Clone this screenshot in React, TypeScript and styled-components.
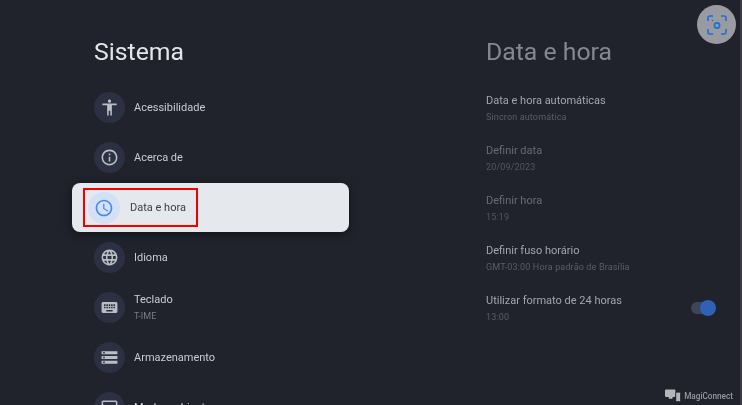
import React from 'react';
import styled, { createGlobalStyle } from 'styled-components';
import {
  MdAccessibility,
  MdInfoOutline,
  MdAccessTime,
  MdLanguage,
  MdKeyboard,
  MdStorage,
} from 'react-icons/md';

const GlobalStyle = createGlobalStyle`
  html, body {
    margin: 0;
    padding: 0;
    background-color: #20232c;
    font-family: Roboto, "Liberation Sans", sans-serif;
  }
`;

const Screen = styled.div`
  position: relative;
  display: flex;
  width: 742px;
  height: 405px;
  overflow: hidden;
  background-color: #20232c;
  box-sizing: border-box;
  border-right: 2px solid #3a3c42;
  filter: blur(0.35px);
`;

const MenuColumn = styled.div`
  display: flex;
  flex-direction: column;
  width: 277px;
  margin-left: 72px;
`;

const MenuTitle = styled.h1`
  margin: 37px 0 0 22px;
  height: 45px;
  flex-shrink: 0;
  font-size: 24.8px;
  line-height: 30px;
  font-weight: 400;
  color: #e3e5e8;
`;

const MenuList = styled.div`
  display: flex;
  flex-direction: column;
  flex-shrink: 0;
`;

const MenuRow = styled.div`
  display: flex;
  align-items: center;
  gap: 9px;
  height: 50px;
  padding-left: 22px;
  flex-shrink: 0;
`;

const FocusedRow = styled.div`
  display: flex;
  align-items: center;
  height: 49px;
  margin: 1px 0 0;
  padding-left: 11px;
  flex-shrink: 0;
  border-radius: 8px;
  background-color: #e5e8ec;
  box-shadow: 0 2px 10px rgba(0, 0, 0, 0.45);
`;

const Highlight = styled.div`
  display: flex;
  align-items: center;
  gap: 10px;
  box-sizing: border-box;
  width: 115px;
  height: 39px;
  padding-left: 3px;
  border: 2px solid #f00000;
`;

const IconCircle = styled.div<{ $focused?: boolean }>`
  display: flex;
  align-items: center;
  justify-content: center;
  flex-shrink: 0;
  width: ${(p) => (p.$focused ? '32px' : '31px')};
  height: ${(p) => (p.$focused ? '32px' : '31px')};
  border-radius: 50%;
  font-size: ${(p) => (p.$focused ? '20px' : '19px')};
  color: ${(p) => (p.$focused ? '#4d87e6' : '#b9bdc4')};
  background-color: ${(p) => (p.$focused ? '#d3e1f7' : '#2b3142')};
`;

const RowText = styled.div`
  display: flex;
  flex-direction: column;
  gap: 5px;
`;

const RowLabel = styled.span<{ $focused?: boolean }>`
  font-size: 11px;
  line-height: 13px;
  color: ${(p) => (p.$focused ? '#3c4047' : '#c9ccd1')};
`;

const RowHint = styled.span`
  font-size: 9px;
  line-height: 11px;
  color: #777b83;
`;

const DetailColumn = styled.div`
  display: flex;
  flex-direction: column;
  margin-left: 137px;
  width: 244px;
`;

const DetailTitle = styled.h2`
  margin: 37px 0 0;
  height: 46px;
  flex-shrink: 0;
  font-size: 24.8px;
  line-height: 30px;
  font-weight: 400;
  color: #85888f;
`;

const DetailRow = styled.div`
  display: flex;
  align-items: center;
  justify-content: space-between;
  height: 50px;
  flex-shrink: 0;
`;

const DetailText = styled.div`
  display: flex;
  flex-direction: column;
  gap: 5px;
`;

const DetailLabel = styled.span<{ $disabled?: boolean }>`
  font-size: 11px;
  line-height: 13px;
  color: ${(p) => (p.$disabled ? '#686b72' : '#a3a6ac')};
`;

const DetailHint = styled.span<{ $disabled?: boolean }>`
  font-size: 9px;
  line-height: 11px;
  letter-spacing: 0.15px;
  color: ${(p) => (p.$disabled ? '#53565d' : '#5b5e65')};
`;

const Toggle = styled.div`
  position: relative;
  width: 23px;
  height: 12px;
  margin-right: 16px;
  border-radius: 6px;
  background-color: #3d4658;
`;

const ToggleThumb = styled.div`
  position: absolute;
  top: -2px;
  right: -2px;
  width: 16px;
  height: 16px;
  border-radius: 50%;
  background-color: #2f61b7;
`;

const CaptureButton = styled.div`
  position: absolute;
  top: 5px;
  right: 4px;
  display: flex;
  align-items: center;
  justify-content: center;
  width: 39px;
  height: 39px;
  border-radius: 50%;
  background-color: #9a9ba0;
`;

const Watermark = styled.div`
  position: absolute;
  right: 7px;
  bottom: 3px;
  display: flex;
  align-items: center;
  gap: 3px;
  font-size: 8.2px;
  font-weight: 500;
  color: #96989c;
`;

const MENU_ITEMS = [
  { label: 'Acessibilidade', icon: <MdAccessibility /> },
  { label: 'Acerca de', icon: <MdInfoOutline /> },
  { label: 'Data e hora', icon: <MdAccessTime />, focused: true },
  { label: 'Idioma', icon: <MdLanguage /> },
  { label: 'Teclado', hint: 'T-IME', icon: <MdKeyboard /> },
  { label: 'Armazenamento', icon: <MdStorage /> },
  {
    label: 'Modo ambiente',
    icon: (
      <svg width="19" height="19" viewBox="0 0 24 24" fill="none" stroke="currentColor" strokeWidth="2">
        <rect x="3" y="4" width="18" height="15" rx="1" />
        <circle cx="12" cy="12" r="2" fill="currentColor" />
      </svg>
    ),
  },
];

const DETAIL_ITEMS = [
  { label: 'Data e hora automáticas', hint: 'Sincron automática' },
  { label: 'Definir data', hint: '20/09/2023', disabled: true },
  { label: 'Definir hora', hint: '15:19', disabled: true },
  { label: 'Definir fuso horário', hint: 'GMT-03:00 Hora padrão de Brasília' },
  { label: 'Utilizar formato de 24 horas', hint: '13:00', toggle: true },
];

const App: React.FC = () => {
  return (
    <Screen>
      <GlobalStyle />
      <MenuColumn>
        <MenuTitle>Sistema</MenuTitle>
        <MenuList>
          {MENU_ITEMS.map((item) =>
            item.focused ? (
              <FocusedRow key={item.label}>
                <Highlight>
                  <IconCircle $focused>{item.icon}</IconCircle>
                  <RowLabel $focused>{item.label}</RowLabel>
                </Highlight>
              </FocusedRow>
            ) : (
              <MenuRow key={item.label}>
                <IconCircle>{item.icon}</IconCircle>
                <RowText>
                  <RowLabel>{item.label}</RowLabel>
                  {item.hint && <RowHint>{item.hint}</RowHint>}
                </RowText>
              </MenuRow>
            )
          )}
        </MenuList>
      </MenuColumn>
      <DetailColumn>
        <DetailTitle>Data e hora</DetailTitle>
        {DETAIL_ITEMS.map((item) => (
          <DetailRow key={item.label}>
            <DetailText>
              <DetailLabel $disabled={item.disabled}>{item.label}</DetailLabel>
              <DetailHint $disabled={item.disabled}>{item.hint}</DetailHint>
            </DetailText>
            {item.toggle && (
              <Toggle>
                <ToggleThumb />
              </Toggle>
            )}
          </DetailRow>
        ))}
      </DetailColumn>
      <CaptureButton>
        <svg width="22" height="22" viewBox="0 0 22 22" fill="none" stroke="#1b6fd8" strokeWidth="1.6">
          <path d="M2 7V4a2 2 0 0 1 2-2h3M15 2h3a2 2 0 0 1 2 2v3M20 15v3a2 2 0 0 1-2 2h-3M7 20H4a2 2 0 0 1-2-2v-3" />
          <circle cx="11" cy="11.5" r="2.6" />
          <circle cx="6.5" cy="6.5" r="0.8" fill="#1b6fd8" stroke="none" />
        </svg>
      </CaptureButton>
      <Watermark>
        <svg width="16" height="13" viewBox="0 0 17 13">
          <rect x="0" y="0" width="11" height="8" rx="1" fill="#b5b6b9" />
          <rect x="4" y="8" width="4" height="2" fill="#b5b6b9" />
          <rect x="11.5" y="3" width="5" height="10" rx="1" fill="#b5b6b9" stroke="#20232c" strokeWidth="0.8" />
        </svg>
        MagiConnect
      </Watermark>
    </Screen>
  );
};

export default App;
